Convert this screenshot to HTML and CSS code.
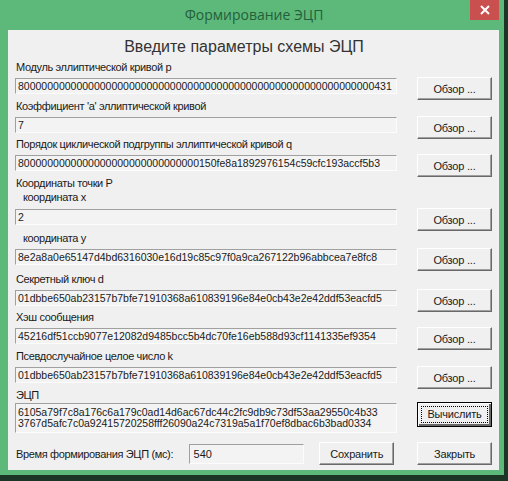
FILE: index.html
```html
<!DOCTYPE html>
<html lang="ru">
<head>
  <meta charset="UTF-8" />
  <title>Формирование ЭЦП</title>
  <link rel="stylesheet" href="styles.css">
</head>
<body>
  <div class="window">
    <div class="titlebar">
      <span></span>
      <div class="title">Формирование ЭЦП</div>
      <div class="close">
        <svg width="10" height="10" viewBox="0 0 10 10"><path d="M1 1 L9 9 M9 1 L1 9" stroke="#fff" stroke-width="2"/></svg>
      </div>
    </div>

    <div class="client">
      <h1 class="heading">Введите параметры схемы ЭЦП</h1>

      <div class="field modulus">
        <div class="label">Модуль эллиптической кривой p</div>
        <div class="row">
          <div class="edit">8000000000000000000000000000000000000000000000000000000000000431</div>
          <button class="btn">Обзор ...</button>
        </div>
      </div>

      <div class="field coef">
        <div class="label">Коэффициент 'a' эллиптической кривой</div>
        <div class="row">
          <div class="edit">7</div>
          <button class="btn">Обзор ...</button>
        </div>
      </div>

      <div class="field order">
        <div class="label">Порядок циклической подгруппы эллиптической кривой q</div>
        <div class="row">
          <div class="edit">8000000000000000000000000000000150fe8a1892976154c59cfc193accf5b3</div>
          <button class="btn">Обзор ...</button>
        </div>
      </div>

      <div class="field point">
        <div class="label group">Координаты точки P</div>
        <div class="label sub coord-x">координата x</div>
        <div class="row">
          <div class="edit">2</div>
          <button class="btn">Обзор ...</button>
        </div>
      </div>

      <div class="field coord-y">
        <div class="label sub">координата y</div>
        <div class="row">
          <div class="edit">8e2a8a0e65147d4bd6316030e16d19c85c97f0a9ca267122b96abbcea7e8fc8</div>
          <button class="btn">Обзор ...</button>
        </div>
      </div>

      <div class="field secret">
        <div class="label">Секретный ключ d</div>
        <div class="row">
          <div class="edit">01dbbe650ab23157b7bfe71910368a610839196e84e0cb43e2e42ddf53eacfd5</div>
          <button class="btn">Обзор ...</button>
        </div>
      </div>

      <div class="field hash">
        <div class="label">Хэш сообщения</div>
        <div class="row">
          <div class="edit">45216df51ccb9077e12082d9485bcc5b4dc70fe16eb588d93cf1141335ef9354</div>
          <button class="btn">Обзор ...</button>
        </div>
      </div>

      <div class="field nonce">
        <div class="label">Псевдослучайное целое число k</div>
        <div class="row">
          <div class="edit">01dbbe650ab23157b7bfe71910368a610839196e84e0cb43e2e42ddf53eacfd5</div>
          <button class="btn">Обзор ...</button>
        </div>
      </div>

      <div class="field sign-field">
        <div class="label sign-label">ЭЦП</div>
        <div class="row sign">
          <div class="edit multi">6105a79f7c8a176c6a179c0ad14d6ac67dc44c2fc9db9c73df53aa29550c4b33<br>3767d5afc7c0a92415720258fff26090a24c7319a5a1f70ef8dbac6b3bad0334</div>
          <button class="btn default"><span class="focus">Вычислить</span></button>
        </div>
      </div>

      <div class="bottom">
        <div class="label time">Время формирования ЭЦП (мс):</div>
        <div class="edit time-edit">540</div>
        <button class="btn save">Сохранить</button>
        <button class="btn">Закрыть</button>
      </div>
    </div>
  </div>
</body>
</html>
```

FILE: styles.css
```css
body {
  margin: 0;
  background-color: #1c3526;
  font-family: "Liberation Sans", Arial, sans-serif;
  color: #000;
}

.window {
  width: 504px;
  height: 475px;
  background-color: #5cb97a;
  display: flex;
  flex-direction: column;
}

.titlebar {
  height: 30px;
  display: grid;
  grid-template-columns: 1fr auto 1fr;
  align-items: start;
}

.title {
  line-height: 30px;
  font-family: "Open Sans", "Noto Sans", sans-serif;
  font-size: 14px;
  color: #245f3a;
  padding-left: 4px;
}

.close {
  justify-self: end;
  margin-right: 5px;
  width: 29px;
  height: 20px;
  background-color: #c9504f;
  display: flex;
  align-items: center;
  justify-content: center;
}

.client {
  margin: 0 5px 0 8px;
  height: 440px;
  background-color: #f0f0f0;
  padding: 8px 7px 0 7px;
  box-sizing: border-box;
}

.heading {
  margin: 0;
  font-size: 16px;
  font-weight: normal;
  line-height: 18px;
  text-align: center;
  padding-right: 19px;
  color: #333;
}

.label {
  font-size: 11px;
  letter-spacing: -0.35px;
  line-height: 13px;
  margin-bottom: 4px;
  padding-left: 1px;
  white-space: nowrap;
  color: #1a1a1a;
}

/* vertical rhythm of the dialog rows */
.field.modulus { margin-top: 5px; }
.field.coef { margin-top: 6px; }
.field.order { margin-top: 5px; }
.field.point { margin-top: 6px; }
.field.coord-y { margin-top: 7px; }
.field.secret { margin-top: 8px; }
.field.hash { margin-top: 5px; }
.field.nonce { margin-top: 6px; }
.field.sign-field { margin-top: 6px; }

.label.group {
  margin-bottom: 1px;
}

.label.sub {
  padding-left: 8px;
}

.label.coord-x {
  margin-bottom: 5px;
}

.label.sign-label {
  margin-bottom: 1px;
}

.row {
  display: grid;
  grid-template-columns: 382px 75px;
  grid-template-rows: 16px;
  column-gap: 20px;
  align-items: start;
}

.row.sign {
  grid-template-rows: 30px;
}

.edit {
  box-sizing: border-box;
  height: 16px;
  border: 1px solid;
  border-color: #a0a0a0 #fcfcfc #fcfcfc #a0a0a0;
  background-color: #f3f3f3;
  font-size: 10.5px;
  line-height: 14px;
  padding: 0 2px;
  white-space: nowrap;
  overflow: hidden;
  color: #1a1a1a;
}

.edit.multi {
  height: 30px;
  line-height: 11px;
  padding-top: 3px;
}

.btn {
  box-sizing: border-box;
  height: 23px;
  width: 75px;
  margin-top: -1px;
  padding: 0;
  font-family: "Liberation Sans", Arial, sans-serif;
  font-size: 11px;
  letter-spacing: -0.2px;
  color: #1a1a1a;
  background-color: #f0f0f0;
  border: 1px solid;
  border-color: #fff #696969 #696969 #fff;
  box-shadow: inset -1px -1px #a0a0a0;
}

.btn.default {
  height: 25px;
  border: 1px solid #000;
  box-shadow: inset 1px 1px #fff, inset -2px -2px #696969, inset -1px -1px #a0a0a0;
  padding: 3px;
}

.focus {
  display: block;
  border: 1px dotted #000;
  line-height: 15px;
}

.bottom {
  margin-top: 9px;
  display: flex;
  align-items: flex-start;
}

.bottom .btn {
  margin-top: 0;
}

.label.time {
  width: 173px;
  margin: 6px 0 0 0;
}

.edit.time-edit {
  width: 116px;
  height: 20px;
  line-height: 18px;
  margin-top: 2px;
  padding-left: 4px;
  font-size: 11px;
}

.btn.save {
  margin-left: 15px;
  margin-right: 23px;
}
```
